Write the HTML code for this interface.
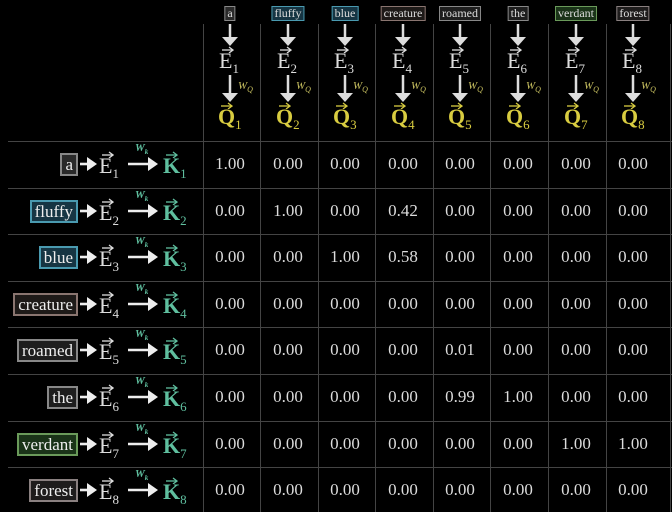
<!DOCTYPE html>
<html><head><meta charset="utf-8"><style>
html,body{margin:0;padding:0;background:#000;}
#r{position:relative;width:672px;height:512px;overflow:hidden;background:#000;font-family:"Liberation Serif",serif;color:#ddd;}
.a{position:absolute;}
.vl{position:absolute;width:1px;background:#444;}
.hl{position:absolute;height:1px;background:#444;left:8px;right:0;}
.num{position:absolute;width:58px;text-align:center;font-size:17px;color:#dcdcdc;line-height:20px;}
.box{position:absolute;font-size:17px;line-height:19px;padding:0 3px;border:2px solid #888;background:#2a2a2a;color:#eee;white-space:nowrap;}
.sbox{position:absolute;font-size:12px;line-height:13px;padding:0 2px;border:1.5px solid #888;background:#2a2a2a;color:#ddd;white-space:nowrap;transform:translateX(-50%);}
.vec{position:absolute;font-size:22px;line-height:22px;white-space:nowrap;}
.vec .L{position:relative;display:inline-block;}
.vec svg{position:absolute;left:3px;top:-4px;}
.vec sub{font-size:13px;vertical-align:-5px;font-weight:normal;}
.ar{position:absolute;}
</style></head><body><div id="r"></div>
<script>
var r=document.getElementById('r');
var words=['a','fluffy','blue','creature','roamed','the','verdant','forest'];
var st=[['#888','#2a2a2a'],['#4a9ab0','#163543'],['#4a9ab0','#163543'],['#8a7570','#1e1a18'],['#888','#1e1e1e'],['#888','#1e1e1e'],['#6a9a5a','#1a3318'],['#8a8080','#1e1c1c']];
var data=[
[1,0,0,0,0,0,0,0],[0,1,0,.42,0,0,0,0],[0,0,1,.58,0,0,0,0],[0,0,0,0,0,0,0,0],
[0,0,0,0,.01,0,0,0],[0,0,0,0,.99,1,0,0],[0,0,0,0,0,0,1,1],[0,0,0,0,0,0,0,0]];
var h='';
var vx=[203,260,318,375,433,490,548,606,670];
vx.forEach(function(x){h+='<div class="vl" style="left:'+x+'px;top:24px;height:488px"></div>';});
for(var i=0;i<8;i++){h+='<div class="hl" style="top:'+Math.round(141+46.6*i)+'px"></div>';}
function darr(cx,y1,y2){var H=y2-y1;return '<svg class="ar" style="left:'+(cx-9)+'px;top:'+y1+'px" width="18" height="'+H+'"><line x1="9" y1="0" x2="9" y2="'+(H-6)+'" stroke="#ddd" stroke-width="2.5"/><polygon points="1,'+(H-9)+' 17,'+(H-9)+' 9,'+H+'" fill="#ddd"/></svg>';}
function harr(x1,x2,cy){var w=x2-x1;return '<svg class="ar" style="left:'+x1+'px;top:'+(cy-9)+'px" width="'+w+'" height="18"><line x1="0" y1="9" x2="'+(w-8)+'" y2="9" stroke="#eee" stroke-width="2.6"/><polygon points="'+(w-10)+',2 '+(w-10)+',16 '+w+',9" fill="#eee"/></svg>';}
function vec(L,n,col,x,y,b){return '<div class="vec" style="left:'+x+'px;top:'+y+'px;color:'+col+';font-weight:'+(b?'bold':'normal')+'"><span class="L">'+L+'<svg width="12" height="7"><line x1="0" y1="4" x2="10" y2="4" stroke="'+col+'" stroke-width="1.3"/><polyline points="7,1 11,4 7,7" fill="none" stroke="'+col+'" stroke-width="1.3"/></svg></span><sub>'+n+'</sub></div>';}
for(var j=0;j<8;j++){
 var cx=Math.round(230+57.6*j);
 h+='<div class="sbox" style="left:'+cx+'px;top:6px;border-color:'+st[j][0]+';background:'+st[j][1]+'">'+words[j]+'</div>';
 h+=darr(cx,24,46);
 h+=vec('E',j+1,'#ddd',cx-11,50,false);
 h+=darr(cx,75,102);
 h+='<div class="a" style="left:'+(cx+8)+'px;top:80px;font-size:11px;font-style:italic;color:#c8c060">W<sub style="font-size:8px">Q</sub></div>';
 h+=vec('Q',j+1,'#d8cc40',cx-12,106,true);
}
for(var i=0;i<8;i++){
 var cy=Math.round(164+46.6*i);
 h+='<div class="box" style="right:'+(672-78)+'px;top:'+(cy-11)+'px;border-color:'+st[i][0]+';background:'+st[i][1]+'">'+words[i]+'</div>';
 h+=harr(80,97,cy);
 h+=vec('E',i+1,'#ddd',99,cy-9,false);
 h+=harr(128,158,cy);
 h+='<div class="a" style="left:135px;top:'+(cy-22)+'px;font-size:11px;font-style:italic;font-weight:bold;color:#5fbf9f">W<sub style="font-size:7px">k</sub></div>';
 h+=vec('K',i+1,'#5fbf9f',163,cy-9,true);
 for(var j=0;j<8;j++){
  h+='<div class="num" style="left:'+Math.round(201+57.6*j)+'px;top:'+(cy-10)+'px">'+data[i][j].toFixed(2)+'</div>';
 }
}
r.innerHTML=h;
</script></body></html>
